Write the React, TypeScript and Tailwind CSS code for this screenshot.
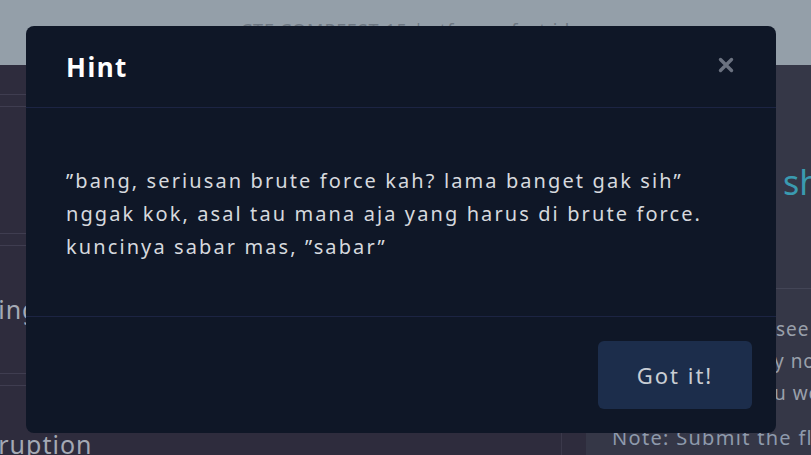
import React from "react";

export default function App() {
  const font = { fontFamily: "'Noto Sans', 'Open Sans', sans-serif" };
  return (
    <div className="relative w-[811px] h-[455px] overflow-hidden bg-[#2e2c3d]" style={font}>
      {/* dimmed page behind */}
      <div className="h-[65px] bg-[#949fa9] flex justify-center">
        <div className="pt-[17px] text-[18px] tracking-[1px] text-[#6d7782]">CTF COMPFEST 15 | ctf.compfest.id</div>
      </div>
      <div className="flex h-[390px]">
        <div className="w-[561px] shrink-0 flex flex-col overflow-hidden">
          <div className="h-[29px] shrink-0" />
          <div className="h-[13px] shrink-0 border-t border-b border-[#3f3d50]" />
          <div className="h-[126px] shrink-0" />
          <div className="h-[13px] shrink-0 border-t border-b border-[#3f3d50]" />
          <div className="h-[127px] shrink-0 flex items-center">
            <span className="text-[25px] tracking-[1px] text-[#a4a9b4] -ml-[54px] whitespace-nowrap">Sorting</span>
          </div>
          <div className="h-[13px] shrink-0 border-t border-b border-[#3f3d50]" />
          <div className="shrink-0 pt-[42px] text-[25px] tracking-[1px] leading-[32px] text-[#a4a9b4] -ml-[46px] whitespace-nowrap">Corruption</div>
        </div>
        <div className="w-[25px] shrink-0 border-l border-[#3b394b] bg-[#2e2c3d]" />
        <div className="flex-1 min-w-0 bg-[#353747] flex flex-col overflow-hidden">
          <div className="h-[223px] shrink-0 flex items-start pt-[92px] pl-[197px]">
            <span className="text-[34px] text-[#3a9ab0] whitespace-nowrap">shell</span>
          </div>
          <div className="border-t border-[#434556] pl-[26px] pt-[24px] text-[19px] leading-[32px] text-[#9aa0ab] whitespace-nowrap tracking-[1px]">
            <div><span className="inline-block w-[164px]" />see the</div>
            <div><span className="inline-block w-[162px]" />y now</div>
            <div><span className="inline-block w-[162px]" />u would</div>
            <div className="mt-[13px] text-[20px] tracking-[1.3px] text-[#8e9aac]">Note: Submit the flag</div>
          </div>
        </div>
      </div>

      {/* modal */}
      <div className="absolute left-[26px] top-[26px] w-[750px] h-[407px] bg-[#0f1727] rounded-[8px] flex flex-col">
        <div className="h-[82px] shrink-0 flex items-center justify-between px-[40px] border-b border-[#1c2443]">
          <span className="text-[26px] font-bold text-white tracking-[1.5px] mt-[2px]">Hint</span>
          <svg width="18" height="18" viewBox="0 0 18 18" className="mr-[1px] mt-[-4px]">
            <path d="M3.5 3.5 L14.5 14.5 M14.5 3.5 L3.5 14.5" stroke="#6b7280" strokeWidth="3.4" strokeLinecap="round" />
          </svg>
        </div>
        <div className="h-[209px] shrink-0 px-[40px] pt-[56px] border-b border-[#1c2443]">
          <p className="text-[20px] leading-[33px] text-[#d6d9de] tracking-[2.1px] whitespace-nowrap">
            ”bang, seriusan brute force kah? lama banget gak sih”
            <br />
            nggak kok, asal tau mana aja yang harus di brute force.
            <br />
            kuncinya sabar mas, ”sabar”
          </p>
        </div>
        <div className="flex-1 flex justify-end items-start pt-[24px] pr-[24px]">
          <button className="w-[154px] h-[68px] rounded-[6px] bg-[#1c2d4b] text-[22px] text-[#c9cdd4] tracking-[2px]">
            Got it!
          </button>
        </div>
      </div>
    </div>
  );
}
